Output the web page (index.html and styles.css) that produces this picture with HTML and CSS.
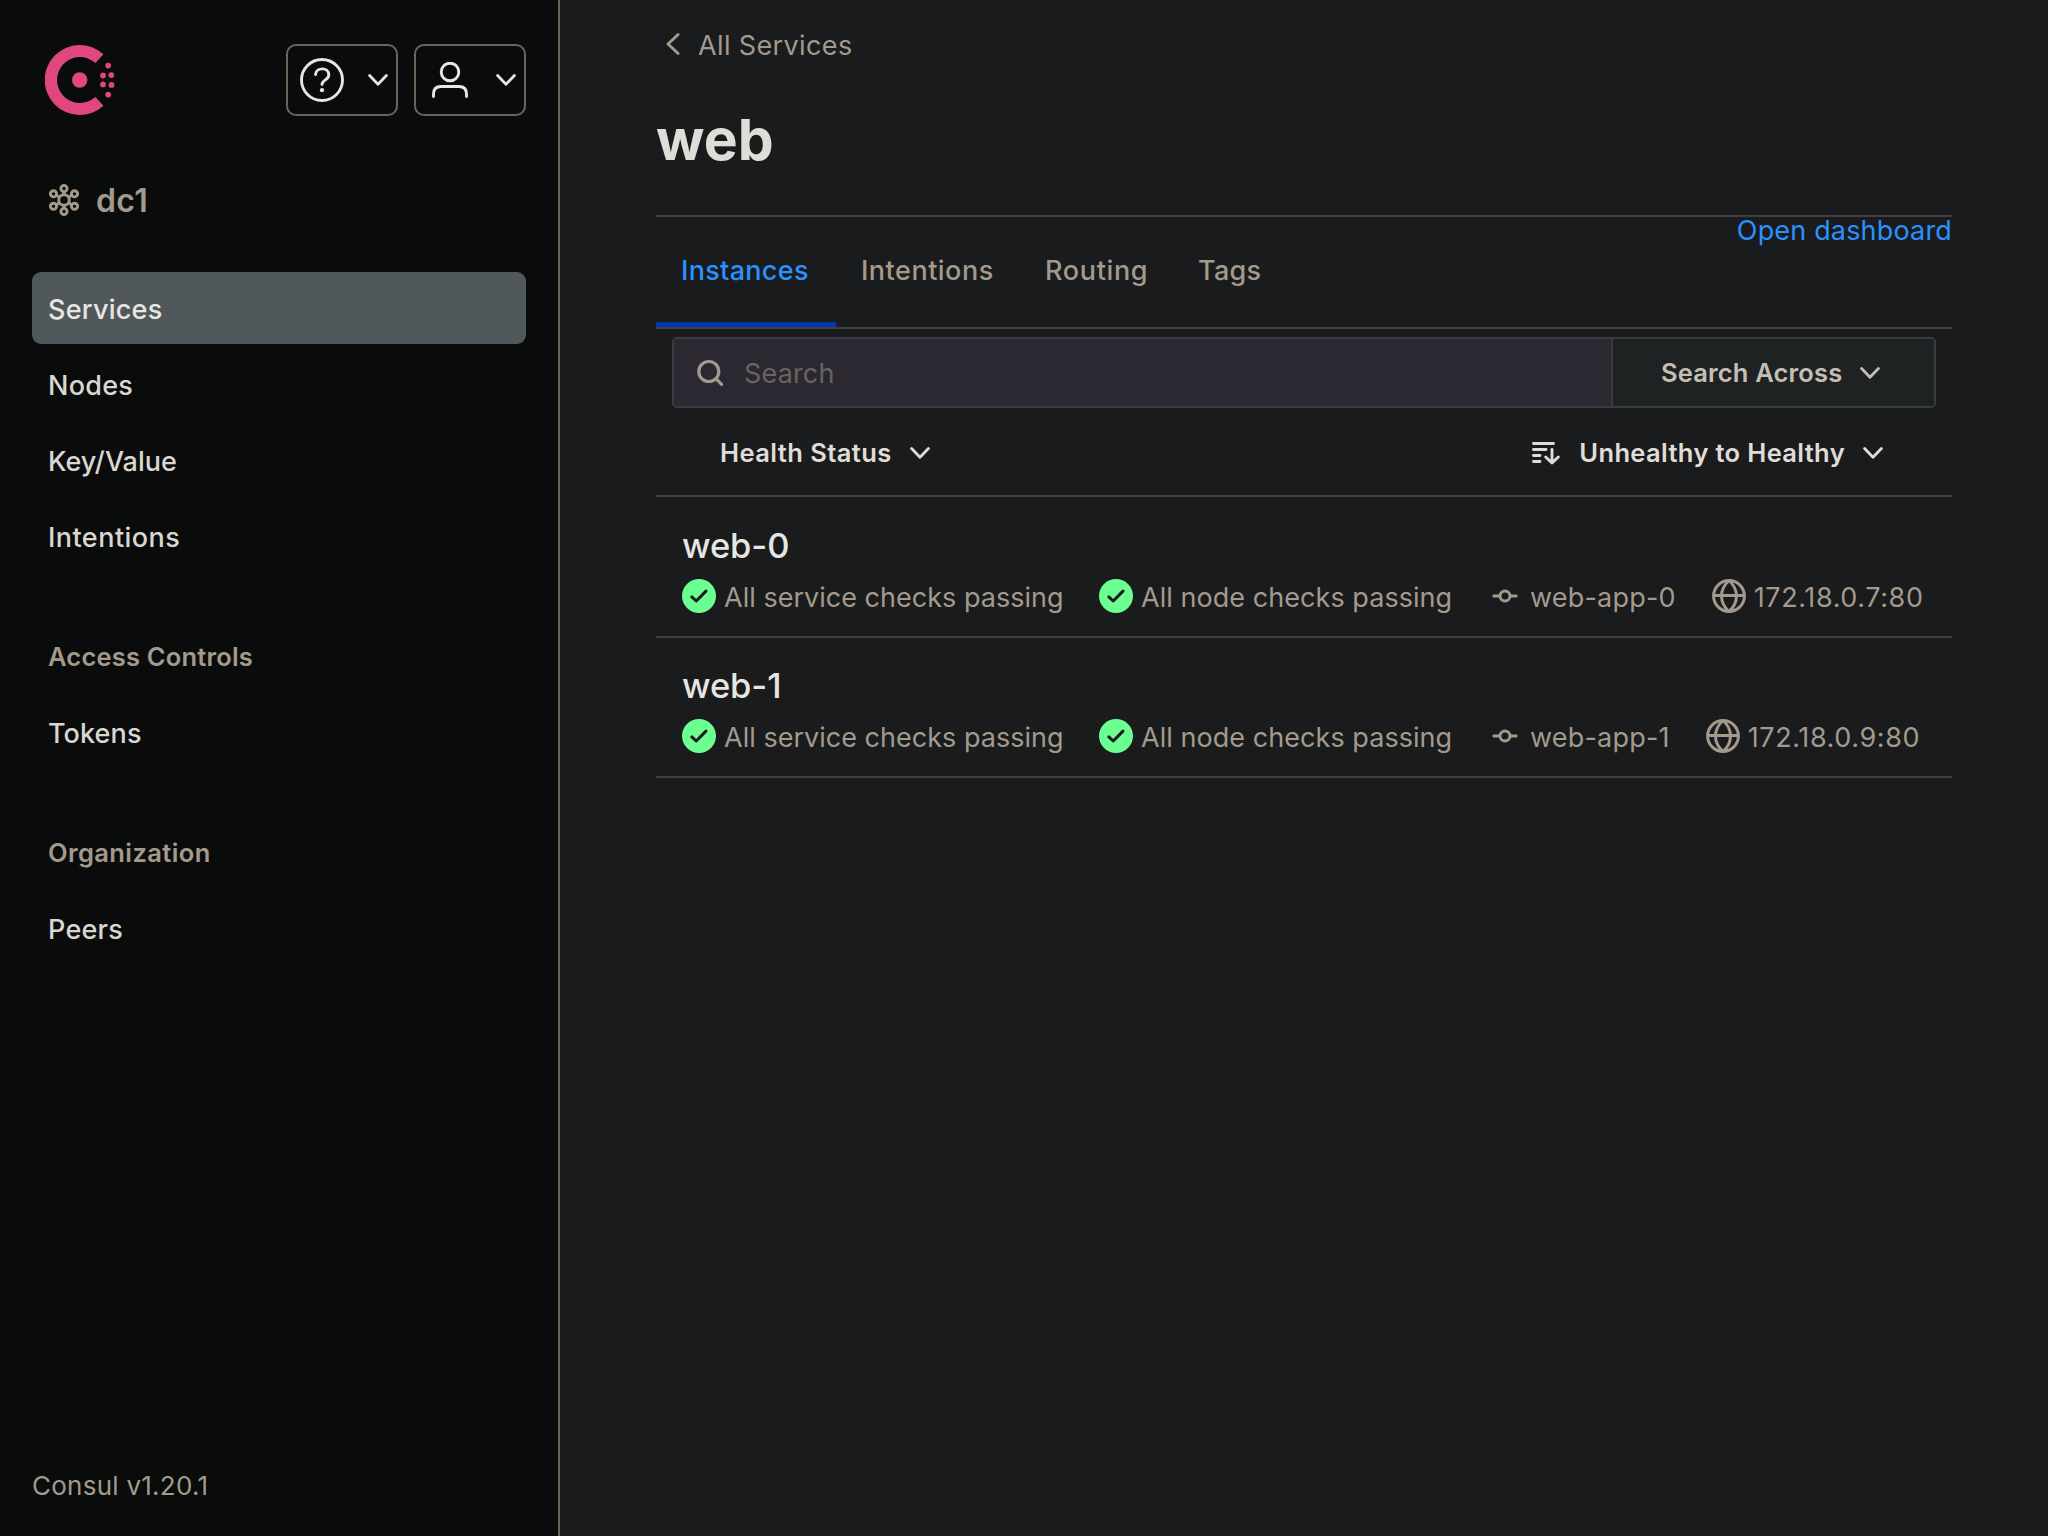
FILE: index.html
```html
<!DOCTYPE html>
<html lang="en">
<head>
<meta charset="utf-8">
<title>web - Consul</title>
<link rel="stylesheet" href="styles.css">
</head>
<body>
<svg class="defs" width="0" height="0">
  <symbol id="chevron" viewBox="0 0 20 12"><path d="M1.6 1.6 10 10.2 18.4 1.6" fill="none" stroke="currentColor" stroke-width="2.8" stroke-linecap="round" stroke-linejoin="round"/></symbol>
  <symbol id="check" viewBox="0 0 34 34"><circle cx="17" cy="17" r="17" fill="#6bff92"/><path d="M9.8 17.9 14.2 22 24 12.1" fill="none" stroke="#1a1b1c" stroke-width="3" stroke-linecap="round" stroke-linejoin="round"/></symbol>
  <symbol id="node" viewBox="0 0 26 14"><g fill="none" stroke="currentColor" stroke-linecap="round"><circle cx="13" cy="7" r="5" stroke-width="3"/><path d="M1.8 7H7.5M18.5 7H24.2" stroke-width="2.9"/></g></symbol>
  <symbol id="globe" viewBox="0 0 34 34"><g fill="none" stroke="currentColor" stroke-width="3"><circle cx="17" cy="17" r="15.4"/><path d="M1.500 16.500H32.500M17 1.500C7 10.500 7 23.500 17 32.500C27 23.500 27 10.500 17 1.500Z"/></g></symbol>
</svg>
<div class="app">
  <aside class="sidebar">
    <header class="sidebar-head">
      <svg class="logo" viewBox="0 0 70 70" fill="#e0477e">
        <path d="M58.500 9.300A35 35 0 1 0 58.500 60.700L50.400 52.100A23 23 0 1 1 50.400 17.900Z"/>
        <circle cx="34.700" cy="35" r="7.700"/>
        <circle cx="63.200" cy="20.600" r="2.900"/><circle cx="58" cy="30.500" r="2.900"/><circle cx="66.300" cy="30.100" r="2.900"/>
        <circle cx="58" cy="39.400" r="2.900"/><circle cx="66.500" cy="39.900" r="2.900"/><circle cx="63.200" cy="49.600" r="2.900"/>
      </svg>
      <div class="head-buttons">
        <button class="head-button help">
          <svg width="44" height="44" viewBox="0 0 44 44" fill="none" stroke="currentColor" stroke-width="2.900" stroke-linecap="round"><circle cx="22" cy="22" r="20.500"/><path d="M15.500 16.500C16.200 8.900 28.800 8.900 28.800 17C28.800 22 22 21.800 22 26.600"/><circle cx="22" cy="32.200" r="2.100" fill="currentColor" stroke="none"/></svg>
          <svg width="20" height="12"><use href="#chevron"/></svg>
        </button>
        <button class="head-button user">
          <svg width="36" height="36" viewBox="0 0 36 36" fill="none" stroke="currentColor" stroke-width="2.900" stroke-linecap="round"><circle cx="18" cy="10" r="8.800"/><path d="M1.500 34.500V32Q1.500 24.500 9 24.500H27Q34.500 24.500 34.500 32V34.500"/></svg>
          <svg width="20" height="12"><use href="#chevron"/></svg>
        </button>
      </div>
    </header>
    <div class="datacenter">
      <svg width="30" height="32" viewBox="0 0 30 32" fill="none" stroke="currentColor" stroke-width="2.900"><circle cx="15" cy="16" r="5.300"/><circle cx="15" cy="4.500" r="3.100"/><circle cx="15" cy="27.500" r="3.100"/><circle cx="4.500" cy="9.800" r="3.100"/><circle cx="25.500" cy="9.800" r="3.100"/><circle cx="4.500" cy="22.300" r="3.100"/><circle cx="25.500" cy="22.300" r="3.100"/><path d="M15 7.500V11M15 21V24.500M7.200 11.300 10.500 13.300M22.800 11.300 19.500 13.300M7.200 20.700 10.500 18.700M22.800 20.700 19.500 18.700"/></svg>
      <span>dc1</span>
    </div>
    <nav class="nav">
      <a class="active">Services</a>
      <a>Nodes</a>
      <a class="kv">Key/Value</a>
      <a class="wide">Intentions</a>
      <h2>Access Controls</h2>
      <a class="tokens">Tokens</a>
      <h2 class="org">Organization</h2>
      <a>Peers</a>
    </nav>
    <footer class="version">Consul v1.20.1</footer>
  </aside>
  <main class="main">
    <a class="crumb"><svg width="14" height="22" viewBox="0 0 14 22" fill="none" stroke="currentColor" stroke-width="2.900" stroke-linecap="round" stroke-linejoin="round"><path d="M12 1.600 2 11 12 20.400"/></svg>All Services</a>
    <h1>web</h1>
    <div class="tabbar">
      <nav class="tabs">
        <a class="active">Instances</a>
        <a class="wide">Intentions</a>
        <a class="wider">Routing</a>
        <a>Tags</a>
      </nav>
      <a class="dashboard">Open dashboard</a>
    </div>
    <div class="search">
      <div class="field"><svg width="27" height="28" viewBox="0 0 27 28" fill="none" stroke="currentColor" stroke-width="3.200" stroke-linecap="round"><circle cx="11.800" cy="12.500" r="10"/><path d="M19.300 20 24.600 25.400"/></svg><span>Search</span></div>
      <button class="across"><span>Search Across</span><svg width="20" height="12"><use href="#chevron"/></svg></button>
    </div>
    <div class="filters">
      <button class="status"><span>Health Status</span><svg width="20" height="12"><use href="#chevron"/></svg></button>
      <button class="sort"><svg class="sort-icon" width="28" height="24" viewBox="0 0 28 24" fill="none" stroke="currentColor" stroke-width="2.900" stroke-linecap="round" stroke-linejoin="round"><path d="M1.500 2.500H21.500M1.500 8.500H14M1.500 14.500H8M1.500 20.500H8M20 8.500V21.500M13.700 16 20 22 26.300 16"/></svg><span>Unhealthy to Healthy</span><svg width="20" height="12"><use href="#chevron"/></svg></button>
    </div>
    <ul class="instances">
      <li>
        <h3>web-0</h3>
        <div class="meta">
          <span class="service"><svg width="34" height="34"><use href="#check"/></svg>All service checks passing</span>
          <span class="nodes"><svg width="34" height="34"><use href="#check"/></svg>All node checks passing</span>
          <span class="node"><svg width="26" height="14"><use href="#node"/></svg>web-app-0</span>
          <span class="address"><svg width="34" height="34"><use href="#globe"/></svg>172.18.0.7:80</span>
        </div>
      </li>
      <li>
        <h3>web-1</h3>
        <div class="meta">
          <span class="service"><svg width="34" height="34"><use href="#check"/></svg>All service checks passing</span>
          <span class="nodes"><svg width="34" height="34"><use href="#check"/></svg>All node checks passing</span>
          <span class="node"><svg width="26" height="14"><use href="#node"/></svg>web-app-1</span>
          <span class="address"><svg width="34" height="34"><use href="#globe"/></svg>172.18.0.9:80</span>
        </div>
      </li>
    </ul>
  </main>
</div>
</body>
</html>
```
FILE: styles.css
```css
* { box-sizing: border-box; margin: 0; padding: 0; }
body { background: #1a1b1c; color: #e0dcd7; font: 27px/36px Inter, "Liberation Sans", sans-serif; overflow: hidden; }
svg { display: block; flex: none; }
.defs { position: absolute; }
button { background: none; border: 0; color: inherit; font: inherit; display: flex; align-items: center; }
ul { list-style: none; }

.app { display: flex; height: 1536px; }

.sidebar { display: flex; flex-direction: column; width: 560px; background: #0a0c0b; border-right: 2px solid #6b6457; padding: 44px 32px 33px; }
.sidebar-head { display: flex; justify-content: space-between; align-items: flex-start; height: 72px; padding-left: 13px; }
.logo { width: 70px; height: 70px; margin-top: 1px; }
.head-buttons { display: flex; gap: 16px; }
.head-button { width: 112px; height: 72px; border: 2px solid #6b6457; border-radius: 10px; justify-content: space-between; color: #e8e6e3; }
.help { padding: 0 8px 0 12px; }
.user { padding: 0 8px 0 16px; }

.datacenter { display: flex; align-items: center; gap: 17px; height: 48px; margin: 60px 0 48px; padding-left: 17px; color: #a39a8d; font-size: 32px; font-weight: 600; letter-spacing: .4px; }
.datacenter span { margin-top: 2px; }

.nav { flex: 1; display: flex; flex-direction: column; gap: 4px; font-weight: 500; letter-spacing: .25px; }
.nav a { height: 72px; line-height: 76px; padding-left: 16px; border-radius: 9px; color: #dad6d0; }
.nav a.active { background: #51585b; color: #e8e6e3; }
.nav a.kv { letter-spacing: 0; }
.nav a.wide { letter-spacing: .45px; }
.nav a.tokens { letter-spacing: .1px; }
.nav h2 { height: 72px; margin-top: 44px; line-height: 74px; padding-left: 16px; color: #a39a8d; font-size: 25.5px; font-weight: 600; letter-spacing: .2px; }
.nav h2.org { letter-spacing: .4px; }
.version { color: #a39a8d; font-size: 26px; line-height: 34px; letter-spacing: .25px; }

.main { width: 1296px; margin-left: 96px; }
.crumb { display: flex; align-items: center; gap: 18px; height: 90px; padding: 2px 0 0 10px; color: #a39a8d; letter-spacing: .37px; }
.crumb svg { margin-bottom: 4px; }
h1 { height: 127px; line-height: 99px; border-bottom: 2px solid #3e3f41; font-size: 57px; font-weight: 700; color: #e0dcd7; }

.tabbar { display: flex; justify-content: space-between; height: 112px; border-bottom: 2px solid #3e3f41; }
.tabs { display: flex; color: #a39a8d; font-weight: 500; letter-spacing: .3px; }
.tabs a { height: 110px; line-height: 107px; padding: 0 26px 0 25px; }
.tabs a.active { width: 180px; color: #2a91ff; border-bottom: 5px solid #0039ad; }
.tabs a.wide { width: 183px; letter-spacing: .5px; }
.tabs a.wider { width: 154px; letter-spacing: .65px; padding-left: 26px; }
.dashboard { color: #2a91ff; line-height: 28px; letter-spacing: .17px; }

.search { display: flex; height: 71px; margin: 8px 16px 0; border: 2px solid #393b3e; border-radius: 5px; overflow: hidden; }
.field { flex: 1; display: flex; align-items: center; gap: 20px; padding-left: 23px; background: #2b2832; color: #a39a8d; }
.field span { color: #68645f; letter-spacing: .15px; margin-top: 2px; }
.across { width: 323px; border-left: 2px solid #393b3e; background: #1f2222; padding-left: 48px; gap: 18px; color: #c5beb5; font-size: 25.5px; font-weight: 600; letter-spacing: .17px; }

.filters { display: flex; justify-content: space-between; align-items: center; height: 89px; border-bottom: 2px solid #3e3f41; padding: 2px 69px 0 64px; font-size: 25.5px; font-weight: 600; }
.status { gap: 18px; letter-spacing: .43px; }
.sort { gap: 18px; letter-spacing: .35px; }
.sort-icon { margin-right: 1px; }

.instances li { height: 140px; padding: 29px 26px 0; border-bottom: 2px solid #3e3f41; }
.instances li:first-child { height: 141px; padding-top: 30px; }
h3 { height: 38px; line-height: 38px; font-size: 34.5px; font-weight: 500; letter-spacing: -.1px; color: #e8e6e3; }
.meta { display: flex; height: 60px; color: #a39a8d; }
.meta span { display: flex; align-items: center; gap: 8px; height: 60px; padding-top: 5px; white-space: nowrap; }
.meta svg { margin-bottom: 3px; }
.meta .service { width: 417px; letter-spacing: .02px; }
.meta .nodes { width: 393px; letter-spacing: .05px; }
.meta .node { gap: 12px; letter-spacing: .2px; margin-right: 36px; }
.meta .address { letter-spacing: .6px; }
```
